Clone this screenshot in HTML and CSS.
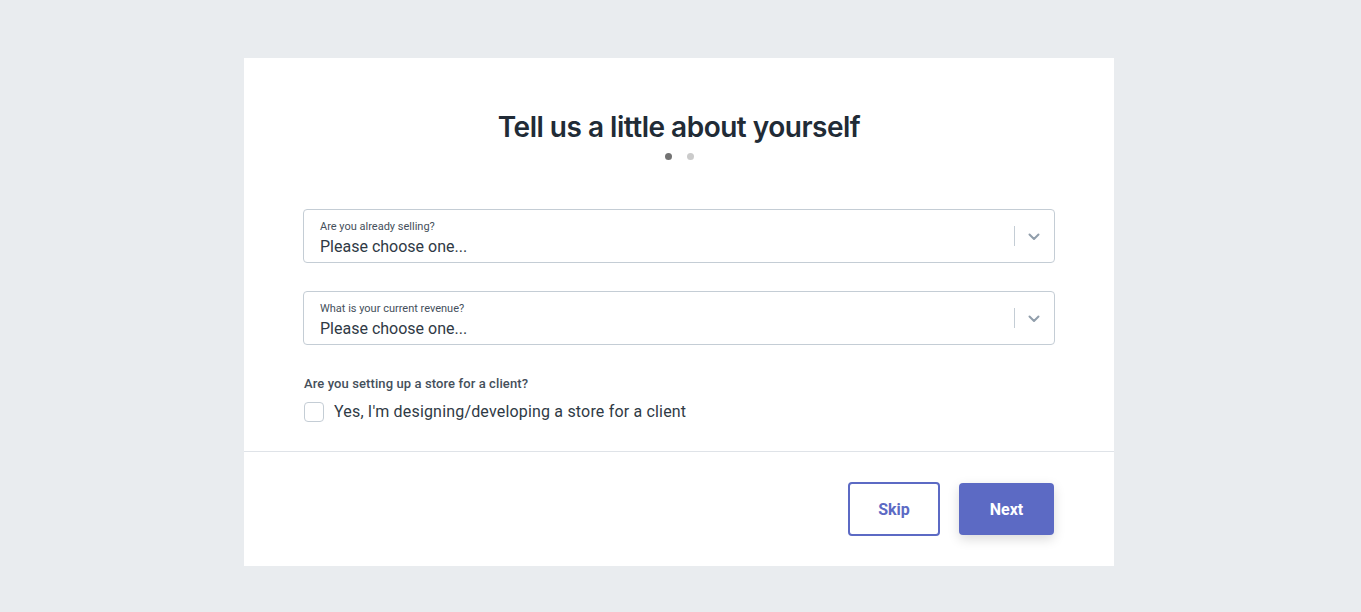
FILE: index.html
```html
<!DOCTYPE html>
<html>
<head>
<meta charset="utf-8">
<link rel="stylesheet" href="styles.css">
</head>
<body>
<div class="page">
  <div class="card">
    <div class="card-body">
      <h1 class="title">Tell us a little about yourself</h1>
      <div class="dots"><span class="dot active"></span><span class="dot"></span></div>
      <div class="fields">
        <div class="select">
          <div class="select-text">
            <div class="select-label">Are you already selling?</div>
            <div class="select-value">Please choose one...</div>
          </div>
          <div class="select-sep"></div>
          <svg class="chev" width="12" height="8" viewBox="0 0 12 8"><path d="M1.5 1.5 L6 6 L10.5 1.5" fill="none" stroke="#919eab" stroke-width="2" stroke-linecap="round" stroke-linejoin="round"/></svg>
        </div>
        <div class="select">
          <div class="select-text">
            <div class="select-label">What is your current revenue?</div>
            <div class="select-value">Please choose one...</div>
          </div>
          <div class="select-sep"></div>
          <svg class="chev" width="12" height="8" viewBox="0 0 12 8"><path d="M1.5 1.5 L6 6 L10.5 1.5" fill="none" stroke="#919eab" stroke-width="2" stroke-linecap="round" stroke-linejoin="round"/></svg>
        </div>
      </div>
      <div class="client">
        <div class="client-q">Are you setting up a store for a client?</div>
        <label class="check-row"><span class="checkbox"></span><span class="check-text">Yes, I'm designing/developing a store for a client</span></label>
      </div>
    </div>
    <div class="card-footer">
      <button class="btn btn-outline">Skip</button>
      <button class="btn btn-primary">Next</button>
    </div>
  </div>
</div>
</body>
</html>
```
FILE: styles.css
```css
html, body {
  margin: 0;
  padding: 0;
  background: #e9ecef;
  font-family: Roboto, "Liberation Sans", sans-serif;
  color: #212b36;
}
.page {
  display: flex;
  justify-content: center;
  padding-top: 58px;
  padding-right: 3px;
  height: 612px;
  box-sizing: border-box;
}
.card {
  width: 870px;
  height: 508px;
  background: #fff;
  display: flex;
  flex-direction: column;
}
.card-body {
  padding: 53px 59px 0;
  box-sizing: border-box;
  border-bottom: 1px solid #dfe3e8;
  height: 394px;
}
.title {
  margin: 0;
  text-align: center;
  font-family: Inter, "Noto Sans", sans-serif;
  font-weight: 600;
  font-size: 28px;
  line-height: 32px;
  letter-spacing: -0.5px;
  color: #212b36;
}
.dots {
  display: flex;
  justify-content: center;
  gap: 15px;
  margin-top: 10px;
  height: 7px;
}
.dot {
  width: 7px;
  height: 7px;
  border-radius: 50%;
  background: #cbcbcb;
}
.dot.active {
  background: #737373;
}
.fields {
  margin-top: 49px;
  display: flex;
  flex-direction: column;
  gap: 28px;
}
.select {
  height: 54px;
  box-sizing: border-box;
  border: 1px solid #c4cdd5;
  border-radius: 4px;
  display: flex;
  align-items: flex-start;
  padding: 10px 16px 0;
}
.select-text {
  flex: 1;
}
.select-label {
  font-size: 11px;
  line-height: 14px;
  color: #454f5b;
}
.select-value {
  font-size: 16px;
  line-height: 20px;
  color: #2f3a45;
  margin-top: 3px;
}
.select-sep {
  width: 1px;
  height: 20px;
  background: #c4cdd5;
  margin-right: 13px;
  margin-top: 6px;
}
.chev {
  display: block;
  margin-right: -2px;
  margin-top: 13px;
}
.client {
  margin-top: 31px;
  padding-left: 1px;
}
.client-q {
  font-size: 13px;
  font-weight: 500;
  line-height: 16px;
  letter-spacing: 0.1px;
  color: #454f5b;
}
.check-row {
  display: flex;
  align-items: center;
  margin-top: 10px;
}
.checkbox {
  width: 20px;
  height: 20px;
  box-sizing: border-box;
  border: 1px solid #c4cdd5;
  border-radius: 4px;
  background: #fff;
  margin-right: 10px;
}
.check-text {
  font-size: 16px;
  line-height: 20px;
  letter-spacing: 0.18px;
  color: #2f3a45;
}
.card-footer {
  flex: 1;
  display: flex;
  justify-content: flex-end;
  align-items: center;
  gap: 19px;
  padding-right: 60px;
}
.btn {
  font-family: Roboto, "Liberation Sans", sans-serif;
  font-size: 16px;
  font-weight: 700;
  border-radius: 4px;
  cursor: pointer;
}
.btn-outline {
  width: 92px;
  height: 54px;
  background: #fff;
  border: 2px solid #5c6ac4;
  color: #5c6ac4;
}
.btn-primary {
  width: 95px;
  height: 52px;
  background: #5c6ac4;
  border: none;
  color: #fff;
  box-shadow: 0 4px 12px rgba(0, 0, 0, 0.15);
}
```
